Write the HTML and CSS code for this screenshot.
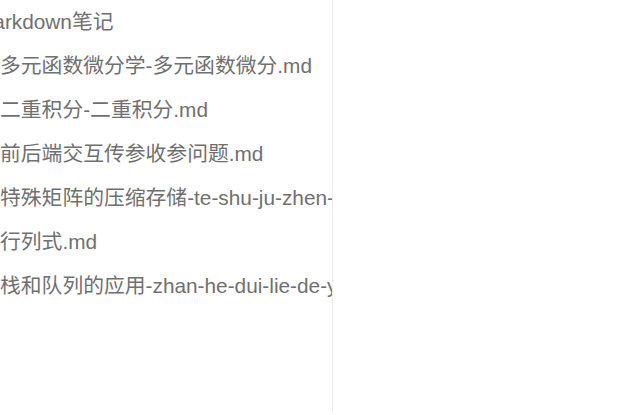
FILE: index.html
```html
<!DOCTYPE html>
<html lang="zh-CN">
<head>
<meta charset="utf-8">
<link rel="stylesheet" href="styles.css">
</head>
<body>
<div class="layout">
  <aside class="sidebar">
    <div class="tree">
      <div class="folder">Markdown笔记</div>
      <ul class="files">
        <li class="file">多元函数微分学-多元函数微分.md</li>
        <li class="file">二重积分-二重积分.md</li>
        <li class="file">前后端交互传参收参问题.md</li>
        <li class="file">特殊矩阵的压缩存储-te-shu-ju-zhen-de-ya-suo-cun-chu.md</li>
        <li class="file">行列式.md</li>
        <li class="file">栈和队列的应用-zhan-he-dui-lie-de-ying-yong.md</li>
      </ul>
    </div>
  </aside>
  <main class="content"></main>
</div>
</body>
</html>
```

FILE: styles.css
```css
html, body {
  margin: 0;
  padding: 0;
  background: #fff;
}
body {
  font-family: "Liberation Sans", "Noto Sans CJK SC", sans-serif;
  font-size: 20.8px;
  color: #707070;
}
.layout {
  display: flex;
  height: 413px;
}
.sidebar {
  width: 332px;
  flex: none;
  border-right: 1px solid #ececec;
  overflow: hidden;
}
.tree {
  margin-left: -24px;
}
.folder,
.file {
  height: 44px;
  line-height: 44px;
  white-space: nowrap;
}
.files {
  list-style: none;
  margin: 0;
  padding: 0 0 0 24px;
}
.content {
  flex: 1;
}
```
